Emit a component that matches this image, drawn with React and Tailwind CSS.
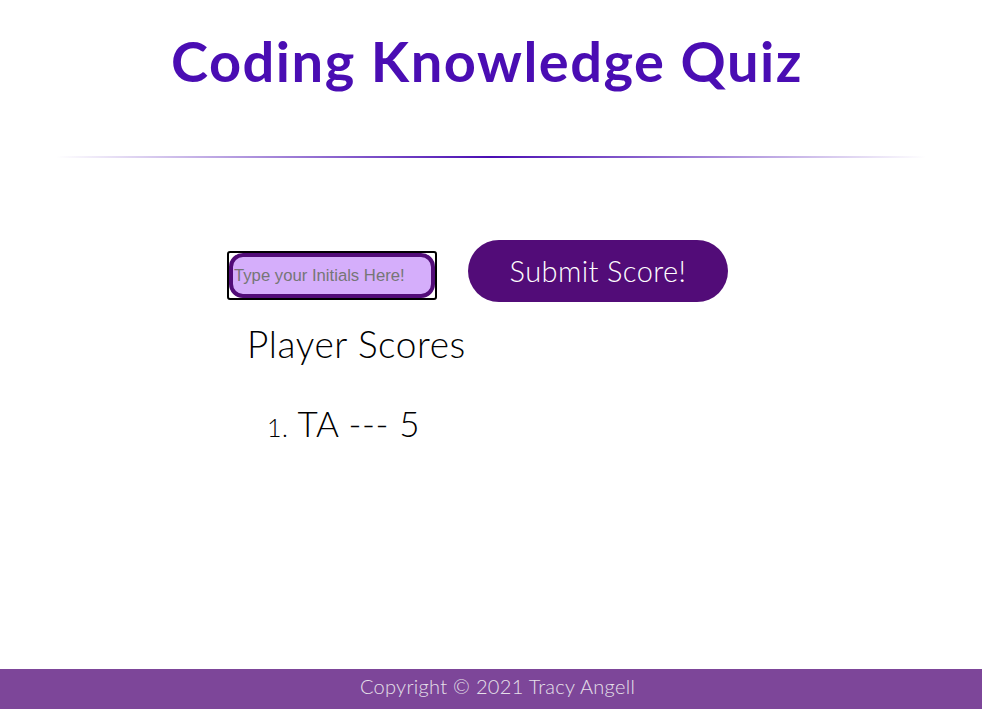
import React from "react";

const App = () => {
    return (
        <div className="min-h-screen flex flex-col bg-white font-['Lato','Open_Sans',sans-serif] text-black">
            {/* Header */}
            <header className="pt-[21px] flex flex-col items-center">
                <h1 className="text-[56px] leading-[80px] font-bold text-[#4a0db3] tracking-[1.5px] -ml-[8px]">
                    Coding Knowledge Quiz
                </h1>
                <div className="mt-[55px] h-[2px] w-[870px] bg-gradient-to-r from-transparent via-[#4a0db3] to-transparent"></div>
            </header>

            {/* Score form */}
            <main className="pl-[227px] pt-[82px]">
                <div className="flex items-center gap-[31px]">
                    <div className="mt-[9px] border-2 border-black rounded-[3px]">
                        <input
                            type="text"
                            placeholder="Type your Initials Here!"
                            className="block w-[206px] h-[45px] border-4 border-[#520c78] rounded-[14px] bg-[#d5aefb] px-[1px] font-['Liberation_Sans',Arial,sans-serif] text-[16.7px] text-black placeholder:text-[#767676] outline-none"
                        />
                    </div>
                    <button className="w-[260px] h-[62px] rounded-full bg-[#520c78] text-white text-[29px] tracking-[0.4px] font-light">
                        Submit Score!
                    </button>
                </div>

                <h2 className="ml-[20px] mt-[18px] text-[37px] leading-[48px] tracking-[0.6px] font-light">Player Scores</h2>
                <ol className="ml-[40px] mt-[31px]">
                    <li className="text-[35px] leading-[48px] tracking-[0.6px] font-light">
                        <span className="text-[25px]">1.</span> TA --- 5
                    </li>
                </ol>
            </main>

            {/* Footer */}
            <footer className="mt-auto h-[40px] bg-[#7d4699] flex items-center justify-center pl-[13px] text-[20px] tracking-[0.3px] font-light text-[#e6e0ea]">
                <span className="-mt-[6px]">Copyright © 2021 Tracy Angell</span>
            </footer>
        </div>
    );
};

export default App;
